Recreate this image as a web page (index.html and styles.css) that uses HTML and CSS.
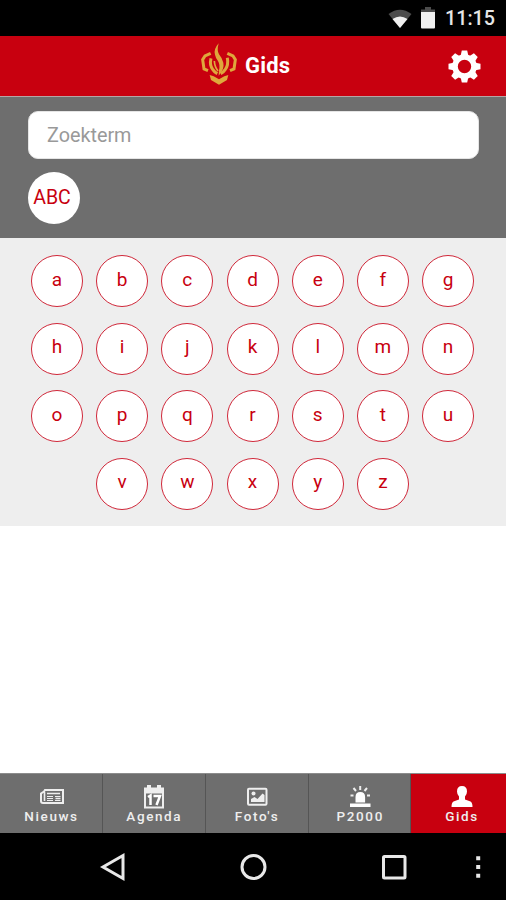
FILE: index.html
```
<!DOCTYPE html>
<html lang="nl">
<head>
    <meta charset="UTF-8">
    <meta name="viewport" content="width=device-width, initial-scale=1.0">
    <title>Gids</title>
    <link rel="stylesheet" href="styles.css">
</head>
<body>
    <div class="statusbar">
        <svg class="wifi" width="24" height="20" viewBox="0 0 24 20">
            <path d="M0.5 5Q12 -3.500 23.500 5L12 19Z" fill="#4c4c4c"/>
            <path d="M4.500 10Q12 5 19.500 10L12 19Z" fill="#f0f0f0"/>
        </svg>
        <svg class="battery" width="14" height="22" viewBox="0 0 14 22">
            <path d="M4 0h6v2.500h4V6H0V2.500h4z" fill="#4c4c4c"/>
            <path d="M0 5h14v15.500q0 1-1 1H1q-1 0-1-1z" fill="#f0f0f0"/>
        </svg>
        <span class="clock">11:15</span>
    </div>

    <header class="header">
        <svg class="logo" width="36" height="42" viewBox="61 38 108 126" fill="none" stroke="#dfa83c">
            <path d="M90 69L73 77L66 88L70 116L82 121" stroke-width="9"/>
            <path d="M140 69L157 77L164 88L160 116L148 121" stroke-width="9"/>
            <path d="M91 84Q86 104 96 117Q101 125 110 130" stroke-width="9"/>
            <path d="M140 82Q144 104 134 117Q129 125 120 130" stroke-width="9"/>
            <path d="M114 39Q98 57 103 73Q105 83 112 92Q119 103 115 120L114 136Q132 116 128 97Q125 84 115 72Q108 60 114 39Z" fill="#dfa83c" stroke="none"/>
            <path d="M101 92Q102 110 112 122" stroke-width="5"/>
            <path d="M87 134L99 138L115 147L131 138L143 134L139 149L115 163L91 149Z" fill="#dfa83c" stroke="none"/>
        </svg>
        <h1>Gids</h1>
        <svg class="settings" width="34" height="34" viewBox="-17.500 -17.500 34 34">
            <circle r="9.500" fill="none" stroke="#fff" stroke-width="5.600"/>
            <g fill="#fff">
                <path id="tooth" d="M-3.800 -11L-2.700 -16H2.700L3.800 -11z"/>
                <use href="#tooth" transform="rotate(45)"/>
                <use href="#tooth" transform="rotate(90)"/>
                <use href="#tooth" transform="rotate(135)"/>
                <use href="#tooth" transform="rotate(180)"/>
                <use href="#tooth" transform="rotate(225)"/>
                <use href="#tooth" transform="rotate(270)"/>
                <use href="#tooth" transform="rotate(315)"/>
            </g>
        </svg>
    </header>

    <div class="search">
        <input type="text" class="search-input" placeholder="Zoekterm">
        <button class="abc">ABC</button>
    </div>

    <div class="letters">
        <a class="letter">a</a>
        <a class="letter">b</a>
        <a class="letter">c</a>
        <a class="letter">d</a>
        <a class="letter">e</a>
        <a class="letter">f</a>
        <a class="letter">g</a>
        <a class="letter">h</a>
        <a class="letter">i</a>
        <a class="letter">j</a>
        <a class="letter">k</a>
        <a class="letter">l</a>
        <a class="letter">m</a>
        <a class="letter">n</a>
        <a class="letter">o</a>
        <a class="letter">p</a>
        <a class="letter">q</a>
        <a class="letter">r</a>
        <a class="letter">s</a>
        <a class="letter">t</a>
        <a class="letter">u</a>
        <a class="letter">v</a>
        <a class="letter">w</a>
        <a class="letter">x</a>
        <a class="letter">y</a>
        <a class="letter">z</a>
    </div>

    <div class="results"></div>

    <nav class="tabs">
        <a class="tab">
            <svg width="24" height="24" viewBox="0 0 24 24" fill="none" stroke="#eee">
                <path d="M5 5h18v13H3q-2 0-2-2V8.500l3-2z" stroke-width="2"/>
                <path d="M4.500 7v9M7 8.500h13" stroke-width="1.600"/>
                <path d="M7 11.500h6M7 13.500h6M7 15.500h6M15 11.500h5.500M15 15.500h5.500" stroke-width="1"/>
                <path d="M15.500 13.500h5" stroke-width="1.500"/>
            </svg>
            <span>Nieuws</span>
        </a>
        <a class="tab">
            <svg width="24" height="24" viewBox="0 0 24 24">
                <path d="M2 2.500h3V0h4v2.500h6V0h4v2.500h3v21H2z" fill="#eee"/>
                <path d="M4 8.500h16v13H4z" fill="#6e6e6e"/>
                <path d="M6 12l2.500-1.500V20M11.500 11h6.500l-3.500 9" fill="none" stroke="#fff" stroke-width="2.500"/>
            </svg>
            <span>Agenda</span>
        </a>
        <a class="tab">
            <svg width="24" height="24" viewBox="0 0 24 24">
                <rect x="3" y="3.800" width="18.500" height="16" rx="1" fill="none" stroke="#eee" stroke-width="2"/>
                <circle cx="8.500" cy="8.500" r="2" fill="#eee"/>
                <path d="M6 17v-3l3.500-2 3 2 5-5.500 2 1.500v7z" fill="#eee"/>
            </svg>
            <span>Foto's</span>
        </a>
        <a class="tab p2000">
            <svg width="24" height="24" viewBox="0 0 24 24">
                <path d="M2 18.500h20.500V22H2zM7.500 17.500V12q0-5 4.800-5t4.800 5v5.500z" fill="#fff"/>
                <path d="M12.200 1v4M5.500 3l2.500 3M19 3L16.500 6M2.500 10.500h3M19 10.500h3" fill="none" stroke="#eee" stroke-width="2"/>
            </svg>
            <span>P2000</span>
        </a>
        <a class="tab active">
            <svg width="24" height="24" viewBox="0 0 24 24">
                <path d="M12 1q5 0 5 5.500 0 3-2 5v3l5.500 2q2 1 2 5.500h-21q0-4.500 2-5.500L9 14.500v-3q-2-2-2-5Q7 1 12 1z" fill="#fff"/>
            </svg>
            <span>Gids</span>
        </a>
    </nav>

    <div class="navbar">
        <svg width="506" height="67" viewBox="0 -1 506 67" fill="none" stroke="#e8e8e8" stroke-width="3">
            <path d="M123 21.500v23L103 33z"/>
            <circle cx="253.500" cy="33" r="11.500"/>
            <rect x="383.500" y="22.500" width="21.500" height="21.500" rx="1"/>
            <path d="M476.200 24.300h4M476.200 33h4M476.200 41.700h4" stroke-width="4"/>
        </svg>
    </div>
</body>
</html>
```

FILE: styles.css
```
body {
    margin: 0;
    height: 900px;
    display: flex;
    flex-direction: column;
    font-family: Roboto, Arial, sans-serif;
    background: #fff;
    overflow: hidden;
}
svg {
    display: block;
}
.statusbar {
    height: 36px;
    box-sizing: border-box;
    padding: 2px 11px 0 0;
    display: flex;
    align-items: center;
    justify-content: flex-end;
    background: #000;
}
.battery {
    margin: 0 10px 2px 9px;
}
.clock {
    color: #e6e6e6;
    font-size: 19.700px;
    font-weight: 500;
    line-height: 20px;
}
.header {
    height: 61px;
    box-sizing: border-box;
    padding-right: 25px;
    display: grid;
    grid-template-columns: 201px 36px 1fr 34px;
    align-items: center;
    background: #c8000f;
    border-bottom: 1px solid #b5a5a5;
}
.logo {
    grid-column: 2;
    margin-bottom: 5px;
}
.header h1 {
    margin: 0 0 1px 8px;
    color: #fff;
    font-size: 22px;
    font-weight: 700;
    line-height: 26px;
    letter-spacing: 0.2px;
}
.search {
    height: 141px;
    box-sizing: border-box;
    padding: 14px 27px 0 28px;
    background: #6e6e6e;
}
.search-input {
    display: block;
    width: 100%;
    height: 48px;
    box-sizing: border-box;
    padding: 0 18px;
    border: 1px solid #e5e5e5;
    border-radius: 10px;
    background: #fff;
    font-family: inherit;
    font-size: 19.800px;
}
.search-input::placeholder {
    color: #999;
}
.abc {
    display: block;
    width: 52px;
    height: 52px;
    margin-top: 13px;
    padding: 0 4px 2px 0;
    border: none;
    border-radius: 50%;
    background: #fff;
    color: #c8000f;
    font-family: inherit;
    font-size: 19.500px;
}
.letters {
    height: 288px;
    box-sizing: border-box;
    padding: 17px 20px 0 19px;
    display: flex;
    flex-wrap: wrap;
    align-content: flex-start;
    justify-content: center;
    gap: 15.500px 13.200px;
    background: #eee;
}
.letter {
    width: 52px;
    height: 52px;
    box-sizing: border-box;
    padding-bottom: 4px;
    display: flex;
    align-items: center;
    justify-content: center;
    border: 1.500px solid #d0283a;
    border-radius: 50%;
    background: #fff;
    color: #c8000f;
    font-size: 19px;
}
.results {
    flex: 1;
}
.tabs {
    height: 60px;
    display: grid;
    grid-template-columns: 103px 102.500px 103px 102.500px 95px;
    box-sizing: border-box;
    border-top: 1px solid #8c8c8c;
    background: #6e6e6e;
}
.tab {
    box-sizing: border-box;
    padding: 11px 0 0 1px;
    display: flex;
    flex-direction: column;
    align-items: center;
    border-right: 1px solid #555;
    color: #eee;
    font-size: 13.500px;
    font-weight: 500;
    line-height: 14px;
    letter-spacing: 1.600px;
}
.tab.p2000 {
    padding-left: 2px;
}
.tab.active {
    padding-left: 7px;
    border-right: none;
    background: #c8000f;
}
.navbar {
    height: 67px;
    background: #000;
}
```
